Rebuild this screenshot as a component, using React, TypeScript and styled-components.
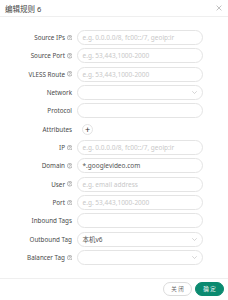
import React from 'react';
import styled, { createGlobalStyle } from 'styled-components';

type RowData = {
    label: string
    help?: boolean
    kind: 'input' | 'select' | 'add'
    placeholder?: string
    value?: string
}

const rows: RowData[] = [
    { label: 'Source IPs', help: true, kind: 'input', placeholder: 'e.g. 0.0.0.0/8, fc00::/7, geoip:ir' },
    { label: 'Source Port', help: true, kind: 'input', placeholder: 'e.g. 53,443,1000-2000' },
    { label: 'VLESS Route', help: true, kind: 'input', placeholder: 'e.g. 53,443,1000-2000' },
    { label: 'Network', kind: 'select' },
    { label: 'Protocol', kind: 'input' },
    { label: 'Attributes', kind: 'add' },
    { label: 'IP', help: true, kind: 'input', placeholder: 'e.g. 0.0.0.0/8, fc00::/7, geoip:ir' },
    { label: 'Domain', help: true, kind: 'input', value: '*.googlevideo.com' },
    { label: 'User', help: true, kind: 'input', placeholder: 'e.g. email address' },
    { label: 'Port', help: true, kind: 'input', placeholder: 'e.g. 53,443,1000-2000' },
    { label: 'Inbound Tags', kind: 'input' },
    { label: 'Outbound Tag', kind: 'select', value: '本机v6' },
    { label: 'Balancer Tag', help: true, kind: 'select' },
]

const GlobalStyle = createGlobalStyle`
    body {
        margin: 0;
        background: #fff;
        font-family: "Noto Sans", "Noto Sans CJK SC", sans-serif;
    }
`

const HelpIcon = () => (
    <svg width="5.5" height="5.5" viewBox="0 0 12 12" fill="none">
        <circle cx="6" cy="6" r="5.2" stroke="#666" strokeWidth="1" />
        <path d="M4.4 4.6a1.6 1.6 0 1 1 2.3 1.5c-.5.3-.7.5-.7 1.1" stroke="#666" strokeWidth="1" strokeLinecap="round" />
        <circle cx="6" cy="8.8" r="0.7" fill="#666" />
    </svg>
)

const Chevron = () => (
    <svg width="5" height="3" viewBox="0 0 10 6" fill="none">
        <path d="M1 1l4 4 4-4" stroke="#bbb" strokeWidth="1.2" strokeLinecap="round" strokeLinejoin="round" />
    </svg>
)

export default function App() {
    return (
        <StyledModal>
            <GlobalStyle />
            <StyledHeader>
                <StyledTitle>编辑规则 6</StyledTitle>
                <StyledClose>
                    <svg width="6" height="6" viewBox="0 0 10 10">
                        <path d="M1 1l8 8M9 1l-8 8" stroke="#999" strokeWidth="1" />
                    </svg>
                </StyledClose>
            </StyledHeader>
            <StyledBody>
                {rows.map((r) => (
                    <StyledRow key={r.label}>
                        <StyledLabel>
                            {r.label}
                            {r.help && <HelpIcon />}
                        </StyledLabel>
                        {r.kind === 'add' ? (
                            <StyledAdd>+</StyledAdd>
                        ) : (
                            <StyledField>
                                {r.value ? <StyledValue>{r.value}</StyledValue> : <StyledPlaceholder>{r.placeholder}</StyledPlaceholder>}
                                {r.kind === 'select' && <Chevron />}
                            </StyledField>
                        )}
                    </StyledRow>
                ))}
            </StyledBody>
            <StyledFooter>
                <StyledButton>关 闭</StyledButton>
                <StyledButton primary>确 定</StyledButton>
            </StyledFooter>
        </StyledModal>
    );
}

const StyledModal = styled.div`
    width: 228px;
    height: 300px;
    background: #fff;
    display: flex;
    flex-direction: column;
`

const StyledHeader = styled.div`
    height: 17px;
    box-sizing: border-box;
    padding: 0 6px 0 5px;
    display: flex;
    align-items: center;
    justify-content: space-between;
    border-bottom: 1px solid #efefef;
`

const StyledTitle = styled.span`
    font-size: 7.5px;
    color: #444;
`

const StyledClose = styled.span`
    display: flex;
    align-items: center;
`

const StyledBody = styled.div`
    padding: 13px 0 0;
    height: 261px;
    box-sizing: border-box;
    display: flex;
    flex-direction: column;
    gap: 3.33px;
`

const StyledRow = styled.div`
    display: grid;
    grid-template-columns: 72px 126px;
    column-gap: 5px;
    height: 15px;
    align-items: center;
`

const StyledLabel = styled.div`
    display: flex;
    justify-content: flex-end;
    align-items: center;
    gap: 1.5px;
    font-size: 6.3px;
    color: #4a4a4a;
    white-space: nowrap;
`

const StyledField = styled.div`
    height: 15px;
    box-sizing: border-box;
    border: 1px solid #e4e4e4;
    border-radius: 8px;
    padding: 0 5px 0 4.5px;
    display: flex;
    align-items: center;
    justify-content: space-between;
`

const StyledPlaceholder = styled.span`
    font-size: 6.5px;
    color: #c8c8c8;
    white-space: nowrap;
`

const StyledValue = styled.span`
    font-size: 6.5px;
    color: #555;
    white-space: nowrap;
`

const StyledAdd = styled.div`
    margin-left: 5px;
    width: 11px;
    height: 11px;
    box-sizing: border-box;
    border: 1px solid #e4e4e4;
    border-radius: 50%;
    display: flex;
    align-items: center;
    justify-content: center;
    font-size: 9px;
    line-height: 1;
    color: #333;
`

const StyledFooter = styled.div`
    flex: 1;
    border-top: 1px solid #efefef;
    display: flex;
    justify-content: flex-end;
    align-items: center;
    gap: 3px;
    padding: 0 4px 1px 0;
`

const StyledButton = styled.div<{ primary?: boolean }>`
    width: 29px;
    height: 14px;
    box-sizing: border-box;
    border-radius: 7px;
    display: flex;
    align-items: center;
    justify-content: center;
    font-size: 5.5px;
    color: ${props => props.primary ? '#fff' : '#666'};
    background: ${props => props.primary ? '#0b8a70' : '#fff'};
    border: 1px solid ${props => props.primary ? '#0b8a70' : '#dcdcdc'};
`
